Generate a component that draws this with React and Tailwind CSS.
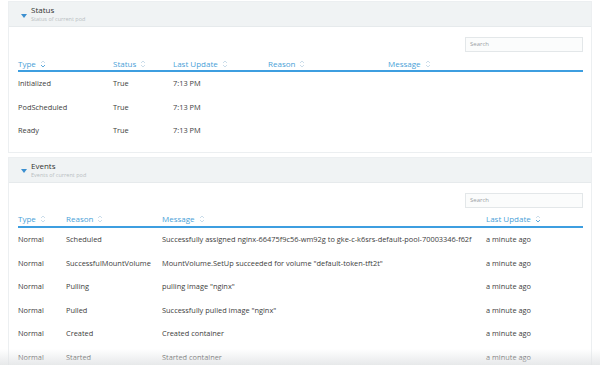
import React from 'react'

const statusCols = [
  { label: 'Type', w: 'w-[95px]', active: true },
  { label: 'Status', w: 'w-[60px]' },
  { label: 'Last Update', w: 'w-[95px]' },
  { label: 'Reason', w: 'w-[120px]' },
  { label: 'Message', w: 'flex-1' },
]

const statusRows = [
  ['Initialized', 'True', '7:13 PM', '', ''],
  ['PodScheduled', 'True', '7:13 PM', '', ''],
  ['Ready', 'True', '7:13 PM', '', ''],
]

const eventCols = [
  { label: 'Type', w: 'w-[48px]' },
  { label: 'Reason', w: 'w-[96px]' },
  { label: 'Message', w: 'w-[324px]' },
  { label: 'Last Update', w: 'flex-1', active: true },
]

const eventRows = [
  ['Normal', 'Scheduled', 'Successfully assigned nginx-66475f9c56-wm92g to gke-c-k6srs-default-pool-70003346-f62f', 'a minute ago'],
  ['Normal', 'SuccessfulMountVolume', 'MountVolume.SetUp succeeded for volume "default-token-tft2t"', 'a minute ago'],
  ['Normal', 'Pulling', 'pulling image "nginx"', 'a minute ago'],
  ['Normal', 'Pulled', 'Successfully pulled image "nginx"', 'a minute ago'],
  ['Normal', 'Created', 'Created container', 'a minute ago'],
  ['Normal', 'Started', 'Started container', 'a minute ago'],
]

function SortIcon({ active }) {
  return (
    <svg width="6" height="8" viewBox="0 0 6 8" className="ml-[4px]">
      <path d="M1 3 L3 1 L5 3" fill="none" stroke="#c5d9e8" strokeWidth="0.9" />
      <path d="M1 5 L3 7 L5 5" fill="none" stroke={active ? '#4a9fd8' : '#c5d9e8'} strokeWidth="0.9" />
    </svg>
  )
}

function Card({ title, subtitle, cols, rows, className = '' }) {
  return (
    <div className={`mx-[8px] border border-[#eceff1] bg-white ${className}`}>
      <div className="h-[25px] bg-[#f0f3f4] border-b border-[#e6eaec] flex items-center pl-[12px]">
        <svg width="6" height="4" viewBox="0 0 6 4" className="mt-[3px]">
          <path d="M0 0 H6 L3 4 Z" fill="#3b8fd0" />
        </svg>
        <div className="ml-[4px] leading-none">
          <div className="text-[8px] text-[#333]">{title}</div>
          <div className="text-[5.5px] text-[#b9bec2] mt-[3px]">{subtitle}</div>
        </div>
      </div>
      <div className="pl-[9px] pr-[8px] pt-[10px] pb-[9px]">
        <div className="flex justify-end">
          <div className="w-[118px] h-[15px] border border-[#e3e7e9] bg-[#fbfcfc] flex items-center px-[4px] text-[6px] text-[#9aa0a4]">
            Search
          </div>
        </div>
        <div className="mt-[5px] h-[15px] flex items-center border-b-2 border-[#3d9ee0] text-[8px] text-[#4a9fd8]">
          {cols.map((c) => (
            <div key={c.label} className={`${c.w} flex items-center`}>
              {c.label}
              <SortIcon active={c.active} />
            </div>
          ))}
        </div>
        {rows.map((r, i) => (
          <div key={i} className="h-[23.6px] flex items-center text-[7.4px] text-[#3d3d3d]">
            {r.map((cell, j) => (
              <div key={j} className={`${cols[j].w} whitespace-nowrap`}>{cell}</div>
            ))}
          </div>
        ))}
      </div>
    </div>
  )
}

export default function App() {
  return (
    <div className="relative w-[600px] h-[365px] overflow-hidden bg-white" style={{ fontFamily: '"Open Sans", Lato, sans-serif' }}>
      <div className="pt-[1px]">
        <Card title="Status" subtitle="Status of current pod" cols={statusCols} rows={statusRows} />
        <Card title="Events" subtitle="Events of current pod" cols={eventCols} rows={eventRows} className="mt-[4px]" />
      </div>
      <div className="absolute left-0 right-0 bottom-0 h-[16px] bg-gradient-to-b from-transparent to-[#e1e3e5]/80 pointer-events-none" />
    </div>
  )
}
